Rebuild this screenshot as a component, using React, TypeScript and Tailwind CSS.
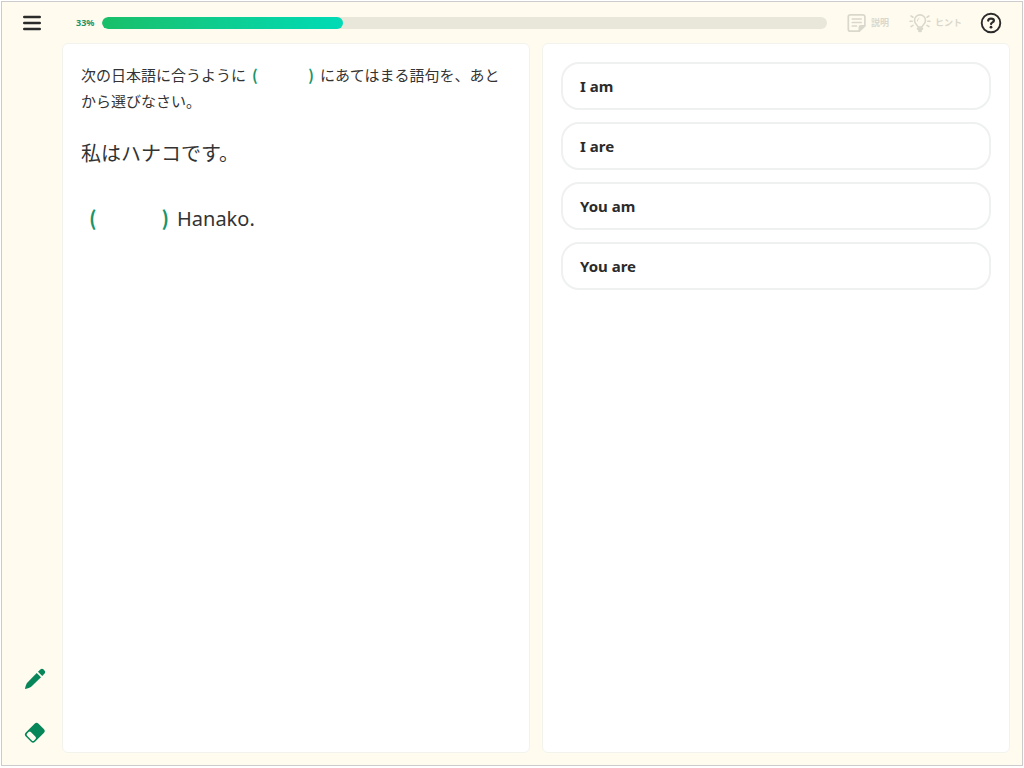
const choices = ["I am", "I are", "You am", "You are"];

const progress = 33.3;

function MenuIcon() {
    return (
        <svg className="h-4 w-5" viewBox="0 0 20 16" fill="none" stroke="#2b2b2b" strokeWidth="2.4" strokeLinecap="round">
            <path d="M2.2 2h15.6M2.2 8h15.6M2.2 14h15.6" />
        </svg>
    );
}

function NoteIcon() {
    return (
        <svg className="size-5" viewBox="0 0 20 20" fill="none" stroke="currentColor" strokeWidth="1.7" strokeLinecap="round" strokeLinejoin="round">
            <path d="M12 18.2H3.3a2 2 0 0 1-2-2V3.8a2 2 0 0 1 2-2h12.6a2 2 0 0 1 2 2v8.4" />
            <path d="M5.3 6h8.8M5.3 9.5h8.8M5.3 13h4.2" />
            <path d="M12.3 18.2v-3.8a1.600 1.600 0 0 1 1.600-1.600h4z" fill="currentColor" />
        </svg>
    );
}

function BulbIcon() {
    return (
        <svg className="h-5 w-[22px]" viewBox="0 0 22 20" fill="none" stroke="currentColor" strokeWidth="1.6" strokeLinecap="round" strokeLinejoin="round">
            <path d="M9 14c0-1.700-3.500-3-3.500-6.600a5.500 5.500 0 0 1 11 0c0 3.600-3.500 4.900-3.500 6.600z" />
            <path d="M8.300 8a2.800 2.800 0 0 1 1.700-2.700" strokeWidth="1" />
            <path d="M9 15.800h4M10.300 18h1.400" strokeWidth="2.600" />
            <path d="M1 8.300h2.200M18.800 8.300h2.200M2 3l2 1.200M20 3l-2 1.200M2 13.600l2-1.200M20 13.600l-2-1.200" />
        </svg>
    );
}

function HelpIcon() {
    return (
        <svg className="size-[22px]" viewBox="0 0 22 22" fill="none" stroke="#2b2b2b" strokeLinecap="round">
            <circle cx="11" cy="11" r="9.3" strokeWidth="1.9" />
            <path d="M8.2 8.7c.1-1.3 1.2-2 2.8-2s2.9.8 2.9 2c0 1.700-2.700 1.600-2.900 3.300" strokeWidth="2.2" />
            <circle cx="11" cy="15.2" r="1.4" fill="#2b2b2b" stroke="none" />
        </svg>
    );
}

function PencilIcon() {
    return (
        <svg className="size-[22px]" viewBox="0 0 22 22" fill="#07865a">
            <path d="M12.700 5l4.300 4.300-9.300 9c-1.500 1.300-4.200 2.300-6.300 2.700-.3 0-.4-.1-.4-.4.400-2.100 1.300-4.800 2.700-6.300z" />
            <path d="M14 3.800l2.300-2.200c1.100-1 2.300-1 3.300 0l.8.800c1 1 1 2.200 0 3.300L18.200 8z" />
        </svg>
    );
}

function EraserIcon() {
    return (
        <svg className="size-[22px]" viewBox="0 0 22 22">
            <g transform="rotate(-45 11 11)">
                <rect x="2" y="4.200" width="18" height="13" rx="2.800" fill="#07865a" />
                <rect x="3.500" y="5.800" width="5.200" height="9.800" rx="1.600" fill="#fffbef" />
            </g>
        </svg>
    );
}

export default function App() {
    return (
        <div className="h-screen bg-white p-px pb-[2px] font-['Noto_Sans','Noto_Sans_CJK_JP',sans-serif] text-[#333]">
            <div className="flex h-full flex-col border border-[#ccc] bg-[#fffbef]">
                <header className="flex h-[41px] shrink-0 items-center px-5">
                    <button type="button" aria-label="メニュー">
                        <MenuIcon />
                    </button>
                    <span className="ml-[34px] w-[26px] text-[9px] font-bold text-[#1c9468]">{Math.round(progress)}%</span>
                    <div
                        role="progressbar"
                        aria-valuenow={progress}
                        aria-valuemin={0}
                        aria-valuemax={100}
                        className="h-3 flex-1 overflow-hidden rounded-full bg-[#e9e6da]"
                    >
                        <div
                            className="h-full rounded-full bg-linear-to-r from-[#19bf68] to-[#00dbb6]"
                            style={{ width: `${progress}%` }}
                        />
                    </div>
                    <button type="button" disabled className="ml-5 flex items-center gap-1 text-[9px] font-bold text-[#dad8cc]">
                        <NoteIcon />
                        <span>説明</span>
                    </button>
                    <button type="button" disabled className="ml-5 flex items-center gap-1 text-[9px] font-bold text-[#dad8cc]">
                        <BulbIcon />
                        <span>ヒント</span>
                    </button>
                    <button type="button" aria-label="ヘルプ" className="ml-[18px]">
                        <HelpIcon />
                    </button>
                </header>

                <div className="flex min-h-0 flex-1 pr-3 pb-3">
                    <aside className="flex w-[60px] shrink-0 flex-col justify-end gap-8 pb-[9px] pl-[22px]">
                        <button type="button" aria-label="ペン" className="w-[22px]">
                            <PencilIcon />
                        </button>
                        <button type="button" aria-label="消しゴム" className="w-[22px]">
                            <EraserIcon />
                        </button>
                    </aside>

                    <main className="grid flex-1 grid-cols-2 gap-3">
                        <section className="rounded-md border border-[#f3f3ee] bg-white px-[18px] py-[18px]">
                            <p className="text-[15px] leading-[26px]">
                                次の日本語に合うように
                                <span className="mx-[6px] inline-flex w-[62px] justify-between font-['Noto_Sans_CJK_JP'] font-bold text-[#1c9468]">
                                    <span>(</span>
                                    <span>)</span>
                                </span>
                                にあてはまる語句を、あとから選びなさい。
                            </p>
                            <p className="mt-6 text-[20px] leading-8">私はハナコです。</p>
                            <p className="mt-8 text-[20px] leading-8">
                                <span className="mx-2 inline-flex w-20 justify-between font-['Noto_Sans_CJK_JP'] font-bold text-[#1c9468]">
                                    <span>(</span>
                                    <span>)</span>
                                </span>
                                Hanako.
                            </p>
                        </section>

                        <section className="flex flex-col gap-3 rounded-md border border-[#f3f3ee] bg-white px-[18px] py-[18px]">
                            {choices.map((choice) => (
                                <button
                                    key={choice}
                                    type="button"
                                    className="h-12 rounded-[18px] border-2 border-[#eff1f0] px-[17px] text-left text-[15px] font-bold text-[#2b2b2b]"
                                >
                                    {choice}
                                </button>
                            ))}
                        </section>
                    </main>
                </div>
            </div>
        </div>
    );
}
